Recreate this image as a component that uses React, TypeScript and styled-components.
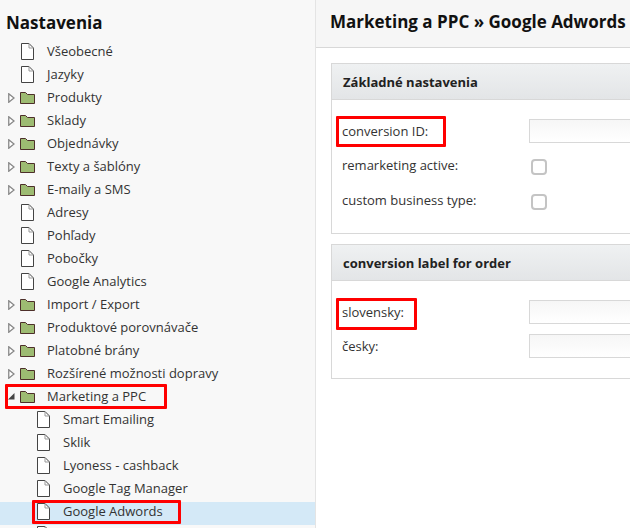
import styled, { createGlobalStyle } from "styled-components";

const Global = createGlobalStyle`
    html, body {
        margin: 0;
        padding: 0;
        background: #fff;
        overflow: hidden;
    }
    body {
        font-family: "Open Sans", "Liberation Sans", sans-serif;
        font-size: 13px;
        color: #333;
    }
`;

const Page = styled.div`
    position: relative;
    display: flex;
    width: 630px;
    height: 528px;
    overflow: hidden;
`;

const Sidebar = styled.aside`
    width: 315px;
    flex: none;
    isolation: isolate;
    background: #f8f8f8;
    border-right: 1px solid #e4e4e4;
    overflow: hidden;
`;

const SideTitle = styled.h2`
    margin: 0;
    padding: 11px 0 0 6px;
    height: 40px;
    box-sizing: border-box;
    font-size: 17px;
    line-height: 23px;
    font-weight: 700;
    color: #111;
`;

const Row = styled.div<{ $depth?: number; $active?: boolean }>`
    position: relative;
    display: flex;
    align-items: center;
    height: 23px;
    padding-left: ${(p) => (p.$depth ? 8 + p.$depth * 16 : 8)}px;
    color: #333;
    white-space: nowrap;

    &::before {
        content: "";
        display: ${(p) => (p.$active ? "block" : "none")};
        position: absolute;
        left: 0;
        right: 0;
        top: 2px;
        height: 23px;
        background: #d4e9f7;
        z-index: -1;
    }
`;

const Arrow = styled.span`
    width: 12px;
    height: 12px;
    flex: none;
    display: flex;
    align-items: center;
`;

const IconBox = styled.span`
    width: 27px;
    flex: none;
    display: flex;
    align-items: center;
`;

const RowText = styled.span`
    line-height: 23px;
    position: relative;
    top: -0.5px;
`;

const Main = styled.main`
    flex: 1;
    min-width: 0;
    background: #fff;
`;

const MainHead = styled.div`
    height: 47px;
    background: #f6f6f6;
    border-bottom: 1px solid #d8d8d8;
    padding-left: 14px;
    font-size: 17px;
    font-weight: 700;
    line-height: 44px;
    color: #111;
    white-space: nowrap;
`;

const Panels = styled.div`
    padding: 15px 0 0 15px;
    display: flex;
    flex-direction: column;
    gap: 10px;
`;

const Panel = styled.section<{ $height: number }>`
    width: 320px;
    height: ${(p) => p.$height}px;
    box-sizing: border-box;
    border: 1px solid #d8d8d8;
    border-right: none;
    background: #fff;
`;

const PanelHead = styled.div`
    height: 36px;
    box-sizing: border-box;
    padding-left: 11px;
    background: linear-gradient(#eff1f2, #e3e5e7);
    border-bottom: 1px solid #d8d8d8;
    font-weight: 700;
    font-size: 13px;
    line-height: 36px;
    color: #222;
`;

const PanelBody = styled.div`
    padding-top: 19px;
    display: flex;
    flex-direction: column;
`;

const Field = styled.div<{ $height: number }>`
    display: flex;
    align-items: flex-start;
    height: ${(p) => p.$height}px;
    padding-left: 10px;
`;

const Label = styled.label<{ $tall?: boolean }>`
    width: 187px;
    flex: none;
    line-height: ${(p) => (p.$tall ? 25 : 23)}px;
    color: #333;
`;

const TextInput = styled.div`
    flex: 1;
    height: 24px;
    box-sizing: border-box;
    border: 1px solid #d8d8d8;
    border-right: none;
    background: linear-gradient(#f6f6f6, #fff);
`;

const Check = styled.div`
    width: 16px;
    height: 16px;
    box-sizing: border-box;
    margin: 5px 0 0 2px;
    border: 2px solid #c4c4c4;
    border-radius: 4px;
    background: #fff;
`;

const Mark = styled.div<{ $x: number; $y: number; $w: number; $h: number }>`
    position: absolute;
    left: ${(p) => p.$x}px;
    top: ${(p) => p.$y}px;
    width: ${(p) => p.$w}px;
    height: ${(p) => p.$h}px;
    box-sizing: border-box;
    border: 3px solid #f00;
    border-radius: 1px;
    pointer-events: none;
`;

const PageSvg = styled.svg`
    margin-left: 1px;
`;

const PageIcon = () => (
    <PageSvg width="13" height="17" viewBox="0 0 13 17">
        <path d="M.5 .5H8L12.5 5V16.5H.5Z" fill="#fff" stroke="#444" />
        <path d="M8 .5V5H12.5" fill="none" stroke="#999" />
    </PageSvg>
);

const FolderIcon = () => (
    <svg width="15" height="12" viewBox="0 0 15 12">
        <path d="M.5 11.5V.5H5.5L7.5 2.5H14.5V11.5Z" fill="#9dbb72" stroke="#4d2f2a" />
    </svg>
);

const Closed = () => (
    <svg width="7" height="10" viewBox="0 0 7 10">
        <path d="M.75 .75L6 5L.75 9.25Z" fill="#fff" stroke="#888" strokeWidth="1.3" />
    </svg>
);

const Opened = () => (
    <svg width="7" height="7" viewBox="0 0 7 7">
        <path d="M0 6.5H6.5V0Z" fill="#444" />
    </svg>
);

type Item = { text: string; kind: "page" | "closed" | "open"; depth?: number; active?: boolean };

const items: Item[] = [
    { text: "Všeobecné", kind: "page" },
    { text: "Jazyky", kind: "page" },
    { text: "Produkty", kind: "closed" },
    { text: "Sklady", kind: "closed" },
    { text: "Objednávky", kind: "closed" },
    { text: "Texty a šablóny", kind: "closed" },
    { text: "E-maily a SMS", kind: "closed" },
    { text: "Adresy", kind: "page" },
    { text: "Pohľady", kind: "page" },
    { text: "Pobočky", kind: "page" },
    { text: "Google Analytics", kind: "page" },
    { text: "Import / Export", kind: "closed" },
    { text: "Produktové porovnávače", kind: "closed" },
    { text: "Platobné brány", kind: "closed" },
    { text: "Rozšírené možnosti dopravy", kind: "closed" },
    { text: "Marketing a PPC", kind: "open" },
    { text: "Smart Emailing", kind: "page", depth: 1 },
    { text: "Sklik", kind: "page", depth: 1 },
    { text: "Lyoness - cashback", kind: "page", depth: 1 },
    { text: "Google Tag Manager", kind: "page", depth: 1 },
    { text: "Google Adwords", kind: "page", depth: 1, active: true },
    { text: "", kind: "page", depth: 1 },
];

export default function App() {
    return (
        <Page>
            <Global />
            <Sidebar>
                <SideTitle>Nastavenia</SideTitle>
                {items.map((item, i) => (
                    <Row key={i} $depth={item.depth} $active={item.active}>
                        <Arrow>
                            {item.kind === "closed" && <Closed />}
                            {item.kind === "open" && <Opened />}
                        </Arrow>
                        <IconBox>{item.kind === "page" ? <PageIcon /> : <FolderIcon />}</IconBox>
                        <RowText>{item.text}</RowText>
                    </Row>
                ))}
            </Sidebar>
            <Main>
                <MainHead>Marketing a PPC » Google Adwords</MainHead>
                <Panels>
                    <Panel $height={171}>
                        <PanelHead>Základné nastavenia</PanelHead>
                        <PanelBody>
                            <Field $height={35}>
                                <Label $tall>conversion ID:</Label>
                                <TextInput />
                            </Field>
                            <Field $height={35}>
                                <Label>remarketing active:</Label>
                                <Check />
                            </Field>
                            <Field $height={35}>
                                <Label>custom business type:</Label>
                                <Check />
                            </Field>
                        </PanelBody>
                    </Panel>
                    <Panel $height={135}>
                        <PanelHead>conversion label for order</PanelHead>
                        <PanelBody>
                            <Field $height={34}>
                                <Label $tall>slovensky:</Label>
                                <TextInput />
                            </Field>
                            <Field $height={34}>
                                <Label $tall>česky:</Label>
                                <TextInput />
                            </Field>
                        </PanelBody>
                    </Panel>
                </Panels>
            </Main>
            <Mark $x={336} $y={116} $w={110} $h={31} />
            <Mark $x={336} $y={298} $w={81} $h={32} />
            <Mark $x={5} $y={384} $w={162} $h={25} />
            <Mark $x={32} $y={500} $w={149} $h={24} />
        </Page>
    );
}
